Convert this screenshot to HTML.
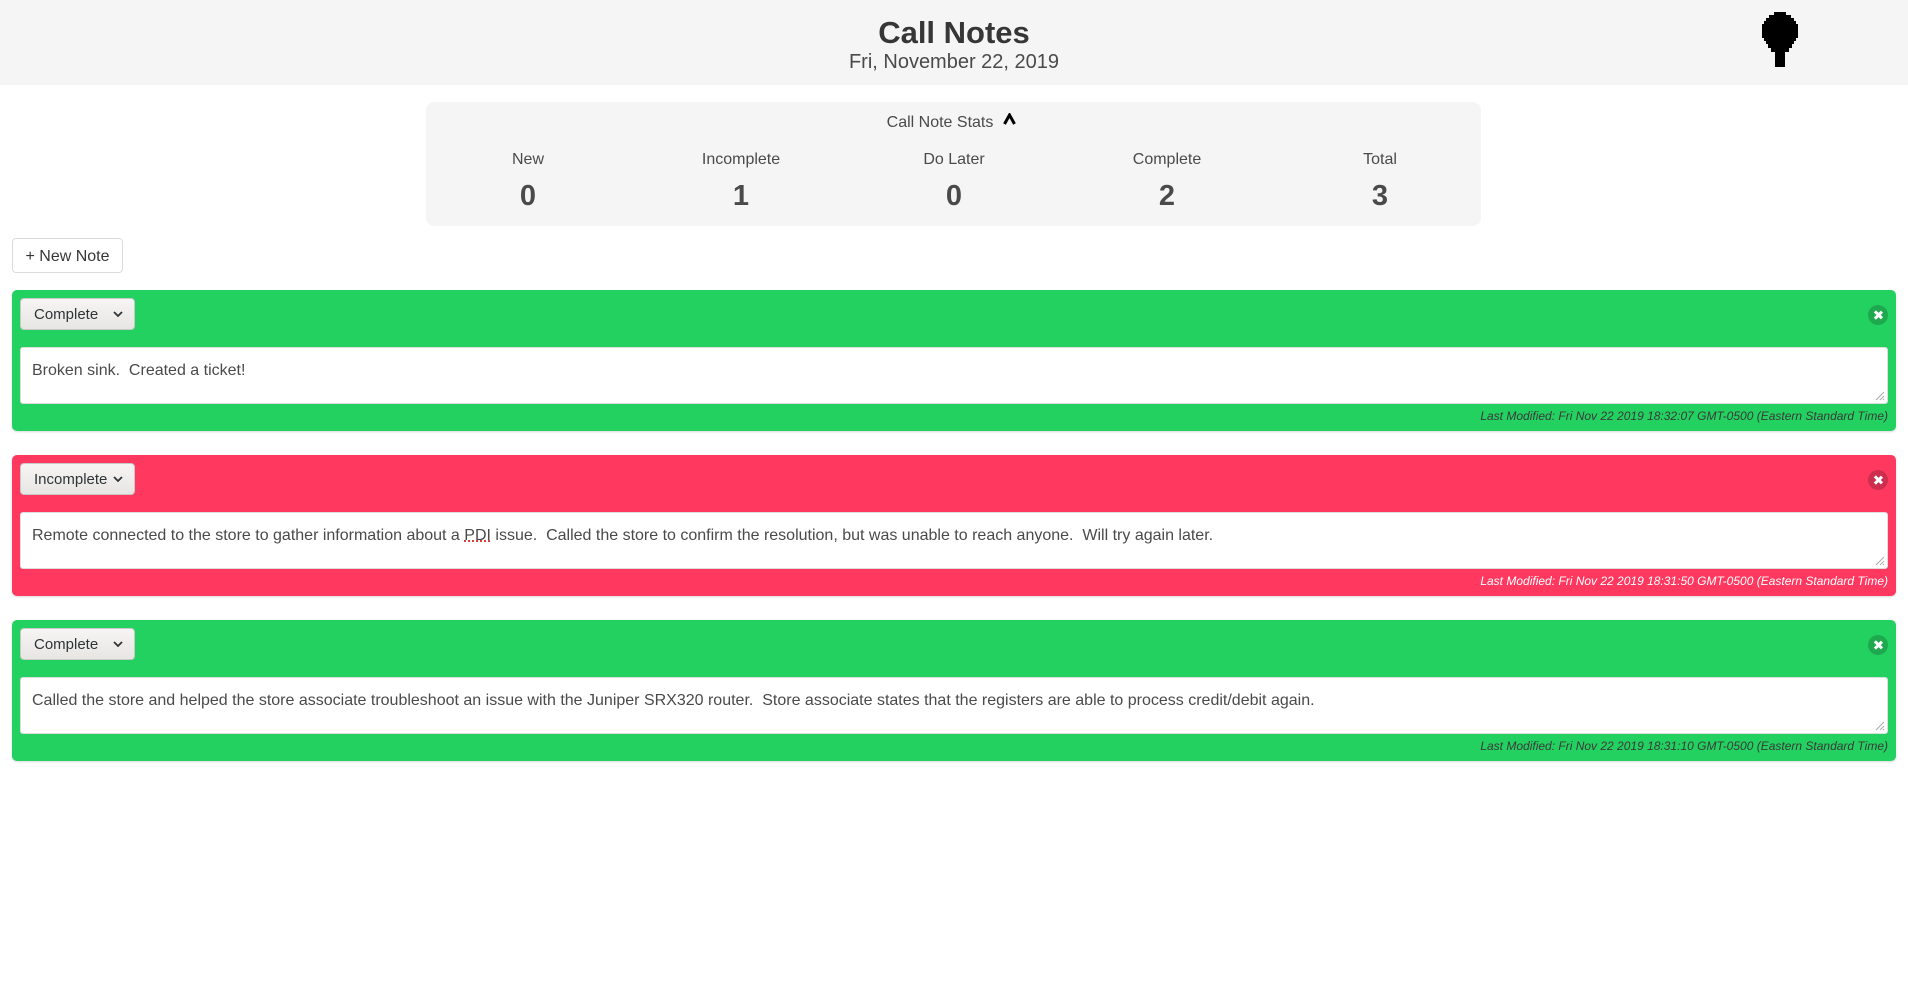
<!DOCTYPE html>
<html><head><meta charset="utf-8"><style>
*{box-sizing:border-box;margin:0;padding:0}
body{width:1908px;height:991px;background:#fff;font-family:"Liberation Sans",sans-serif;color:#363636;position:relative;overflow:hidden}
.hdr{position:absolute;left:0;top:0;width:1908px;height:85px;background:#f5f5f5}
.title{position:absolute;left:0;width:1908px;text-align:center;top:15px;font-size:31px;font-weight:bold;color:#363636}
.date{position:absolute;left:0;width:1908px;text-align:center;top:51px;font-size:20px;color:#4a4a4a}
.stats{position:absolute;left:426px;top:102px;width:1055px;height:124px;background:#f5f5f5;border-radius:8px}
.abs{position:absolute;text-align:center;transform:translateX(-50%);white-space:nowrap}
.lbl{font-size:16px;color:#4a4a4a;top:151px}
.num{font-size:29px;font-weight:bold;color:#4a4a4a;top:180px}
.newbtn{position:absolute;left:12px;top:238px;width:111px;height:35px;border:1px solid #dbdbdb;border-radius:4px;font-size:16px;line-height:35px;text-align:center;color:#363636;background:#fff}
.card{position:absolute;left:12px;width:1884px;height:141px;border-radius:5px;box-shadow:0 1px 2px rgba(10,10,10,.15)}
.g{background:#23d160}.r{background:#ff3860}
.sel{position:absolute;left:8px;top:8px;width:115px;height:32px;border-radius:4px;border:1px solid #c8c8c8;background:linear-gradient(#f6f5f4,#e8e6e3);font-size:15px;line-height:32px;padding-left:13px;color:#2e3436}
.sel svg{position:absolute;right:10px;top:10px}
.ta{position:absolute;left:8px;top:57px;width:1868px;height:57px;background:#fff;border-radius:3px;border:1px solid #ddd;font-size:16px;padding:14px 0 0 11px;color:#4a4a4a;white-space:nowrap}
.x{position:absolute;right:8px;top:15px;width:20px;height:20px;border-radius:50%;background:rgba(10,10,10,.2)}
.x:before,.x:after{content:"";position:absolute;left:9px;top:5px;width:2.5px;height:10px;background:#fff;transform:rotate(45deg)}
.x:after{transform:rotate(-45deg)}
.lm{position:absolute;right:8px;top:119px;font-size:12px;font-style:italic;color:#3a3a3a;white-space:nowrap}
.r .lm{color:#fff}
.grip{position:absolute;right:2px;bottom:2px}
.pdi{text-decoration:underline dotted #c00}
</style></head><body>
<div class="hdr"></div>
<div class="title">Call Notes</div>
<div class="date">Fri, November 22, 2019</div>
<svg style="position:absolute;left:1761px;top:12px" width="38" height="56" viewBox="0 0 38 56" shape-rendering="crispEdges"><path d="M13 0H25V3H30V6H33V9H35V12H37V26H35V29H33V32H31V36H28V40H24V55H14V40H10V36H7V32H5V29H3V26H1V12H3V9H5V6H8V3H13Z" fill="#000"/></svg>
<div class="stats"></div>
<div class="abs" style="left:940px;top:114px;font-size:16px;color:#4a4a4a">Call Note Stats</div>
<svg style="position:absolute;left:1003px;top:113px" width="13" height="12" viewBox="0 0 13 12"><path d="M1.5 11L6.5 2L11.5 11" stroke="#000" stroke-width="3" fill="none"/></svg>
<div class="abs lbl" style="left:528px">New</div>
<div class="abs lbl" style="left:741px">Incomplete</div>
<div class="abs lbl" style="left:954px">Do Later</div>
<div class="abs lbl" style="left:1167px">Complete</div>
<div class="abs lbl" style="left:1380px">Total</div>
<div class="abs num" style="left:528px">0</div>
<div class="abs num" style="left:741px">1</div>
<div class="abs num" style="left:954px">0</div>
<div class="abs num" style="left:1167px">2</div>
<div class="abs num" style="left:1380px">3</div>
<div class="newbtn">+ New Note</div>

<div class="card g" style="top:290px">
<div class="sel">Complete<svg width="12" height="10" viewBox="0 0 12 10"><path d="M2 3L6 7L10 3" stroke="#2e3436" stroke-width="1.8" fill="none"/></svg></div>
<div class="x"></div>
<div class="ta">Broken sink.&nbsp; Created a ticket!<svg class="grip" width="12" height="12"><path d="M11 3L3 11M11 7L7 11M11 10L10 11" stroke="#aaa"/></svg></div>
<div class="lm">Last Modified: Fri Nov 22 2019 18:32:07 GMT-0500 (Eastern Standard Time)</div>
</div>

<div class="card r" style="top:455px">
<div class="sel">Incomplete<svg width="12" height="10" viewBox="0 0 12 10"><path d="M2 3L6 7L10 3" stroke="#2e3436" stroke-width="1.8" fill="none"/></svg></div>
<div class="x"></div>
<div class="ta">Remote connected to the store to gather information about a <span class="pdi">PDI</span> issue.&nbsp; Called the store to confirm the resolution, but was unable to reach anyone.&nbsp; Will try again later.<svg class="grip" width="12" height="12"><path d="M11 3L3 11M11 7L7 11M11 10L10 11" stroke="#aaa"/></svg></div>
<div class="lm">Last Modified: Fri Nov 22 2019 18:31:50 GMT-0500 (Eastern Standard Time)</div>
</div>

<div class="card g" style="top:620px">
<div class="sel">Complete<svg width="12" height="10" viewBox="0 0 12 10"><path d="M2 3L6 7L10 3" stroke="#2e3436" stroke-width="1.8" fill="none"/></svg></div>
<div class="x"></div>
<div class="ta">Called the store and helped the store associate troubleshoot an issue with the Juniper SRX320 router.&nbsp; Store associate states that the registers are able to process credit/debit again.<svg class="grip" width="12" height="12"><path d="M11 3L3 11M11 7L7 11M11 10L10 11" stroke="#aaa"/></svg></div>
<div class="lm">Last Modified: Fri Nov 22 2019 18:31:10 GMT-0500 (Eastern Standard Time)</div>
</div>
</body></html>
